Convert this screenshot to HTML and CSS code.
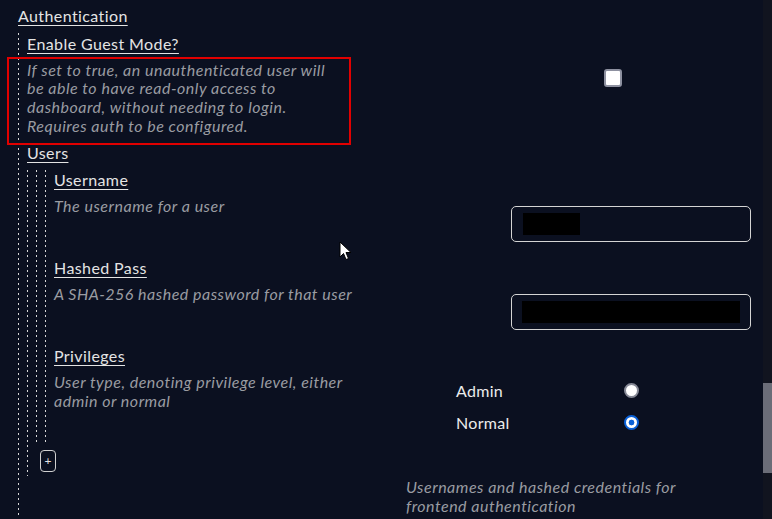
FILE: index.html
```html
<!DOCTYPE html>
<html lang="en">
<head>
    <meta charset="UTF-8">
    <title>Config - Authentication</title>
    <link rel="stylesheet" href="styles.css">
</head>
<body>
    <div class="page">
        <main class="form">
            <div class="title">Authentication</div>
            <div class="group">
                <div class="row row-guest">
                    <div class="info">
                        <div class="label">Enable Guest Mode?</div>
                        <div class="desc">If set to true, an unauthenticated user will be able to have read-only access to dashboard, without needing to login. Requires auth to be configured.</div>
                    </div>
                    <div class="control control-guest">
                        <input type="checkbox" class="check">
                    </div>
                </div>

                <div class="label label-users">Users</div>
                <div class="array">
                    <div class="item">
                        <div class="object">
                            <div class="row">
                                <div class="info">
                                    <div class="label">Username</div>
                                    <div class="desc">The username for a user</div>
                                </div>
                                <div class="control control-text">
                                    <div class="text-input"><span class="redact redact-short"></span></div>
                                </div>
                            </div>
                            <div class="row">
                                <div class="info">
                                    <div class="label">Hashed Pass</div>
                                    <div class="desc">A SHA-256 hashed password for that user</div>
                                </div>
                                <div class="control control-text">
                                    <div class="text-input"><span class="redact redact-long"></span></div>
                                </div>
                            </div>
                            <div class="row row-last">
                                <div class="info">
                                    <div class="label">Privileges</div>
                                    <div class="desc">User type, denoting privilege level, either admin or normal</div>
                                </div>
                                <div class="control control-radio">
                                    <label class="option">
                                        <span>Admin</span>
                                        <input type="radio" name="priv" class="radio">
                                    </label>
                                    <label class="option">
                                        <span>Normal</span>
                                        <input type="radio" name="priv" class="radio" checked>
                                    </label>
                                </div>
                            </div>
                        </div>
                    </div>
                    <button class="add">+</button>
                </div>
                <div class="desc users-desc">Usernames and hashed credentials for frontend authentication</div>
            </div>
        </main>
        <div class="scrollbar"><div class="thumb"></div></div>
    </div>

    <div class="highlight"></div>
    <svg class="cursor" width="13" height="20" viewBox="0 0 13 20">
        <path d="M1 1 L1 16 L4.5 12.5 L7 18.5 L9.5 17.5 L7 11.5 L12 11.5 Z" fill="#fff" stroke="#000" stroke-width="1"/>
    </svg>
</body>
</html>
```

FILE: styles.css
```css
html, body {
    margin: 0;
    height: 100%;
    overflow: hidden;
}
body {
    background-color: #0b1020;
    color: #e4e4e4;
    font-family: Lato, "Open Sans", sans-serif;
    font-size: 16px;
    position: relative;
}
.page {
    display: flex;
    height: 519px;
}
.form {
    flex: 1;
    padding: 6px 12px 0 18px;
}
.title, .label {
    line-height: 19px;
    letter-spacing: 0.4px;
    text-decoration: underline;
    text-underline-offset: 3px;
    text-decoration-thickness: 1px;
}
.title {
    margin-bottom: 8px;
}
.label {
    margin-bottom: 8px;
}
.desc {
    color: #9a9ca2;
    font-style: italic;
    line-height: 18.7px;
    letter-spacing: 0.5px;
}
/* dotted guide lines on the left of nested blocks */
.group, .array, .item, .object {
    background-image: linear-gradient(#d8d8d8 40%, transparent 40%);
    background-size: 1px 5px;
    background-repeat: repeat-y;
    background-position: left top;
    padding-left: 9px;
}
.row {
    display: grid;
    grid-template-columns: 1fr 240px;
    margin-bottom: 8px;
}
.row-guest {
    grid-template-columns: 318px 1fr;
}
.row-guest .info {
    padding-top: 0.5px;
}
.control-guest {
    padding: 36px 0 0 259px;
}
.check {
    appearance: none;
    -webkit-appearance: none;
    margin: 0;
    width: 18px;
    height: 18px;
    background: #fff;
    border: 2px solid #8e91a0;
    border-radius: 3px;
}
.array {
    padding-bottom: 4px;
}
.object {
    padding-bottom: 6px;
}
.object .row {
    margin-bottom: 16px;
}
.object .row .info {
    max-width: 316px;
}
.object .row-last {
    margin-bottom: 0;
    grid-template-columns: 1fr 295px;
}
.control-text {
    padding-top: 36px;
}
.text-input {
    border: 1px solid #d4d4d4;
    border-radius: 5px;
    padding: 6px 11px;
    box-sizing: border-box;
    height: 36px;
}
.redact {
    display: block;
    height: 22px;
    background: #000;
}
.redact-short {
    width: 57px;
}
.redact-long {
    width: 218px;
    margin-left: -1px;
}
.control-radio {
    padding-top: 28px;
}
.option {
    display: grid;
    grid-template-columns: 168px 15px;
    align-items: center;
    height: 32px;
    color: #ececec;
    letter-spacing: 0.3px;
}
.radio {
    appearance: none;
    -webkit-appearance: none;
    margin: 0;
    width: 15px;
    height: 15px;
    border-radius: 50%;
    background: #fff;
    border: 2px solid #868996;
    box-sizing: border-box;
}
.radio:checked {
    border-color: #0b61d8;
    background: radial-gradient(circle, #0b61d8 0 2.6px, #fff 3.2px);
}
.add {
    display: block;
    margin: 6px 0 0 4px;
    width: 16px;
    height: 22px;
    padding: 0;
    background: transparent;
    color: #e4e4e4;
    border: 1px solid #d0d0d0;
    border-radius: 4px;
    font-family: Lato, sans-serif;
    font-size: 12px;
    line-height: 18px;
    cursor: pointer;
}
.users-desc {
    margin: 2px 0 0 379px;
    padding-right: 60px;
}
.scrollbar {
    width: 9px;
    background: #11141f;
}
.thumb {
    margin-top: 383px;
    height: 90px;
    background: #6b6d78;
}
.highlight {
    position: absolute;
    left: 7px;
    top: 57px;
    width: 340px;
    height: 84px;
    border: 2px solid #e10000;
    pointer-events: none;
}
.cursor {
    position: absolute;
    left: 339px;
    top: 241px;
}
```
